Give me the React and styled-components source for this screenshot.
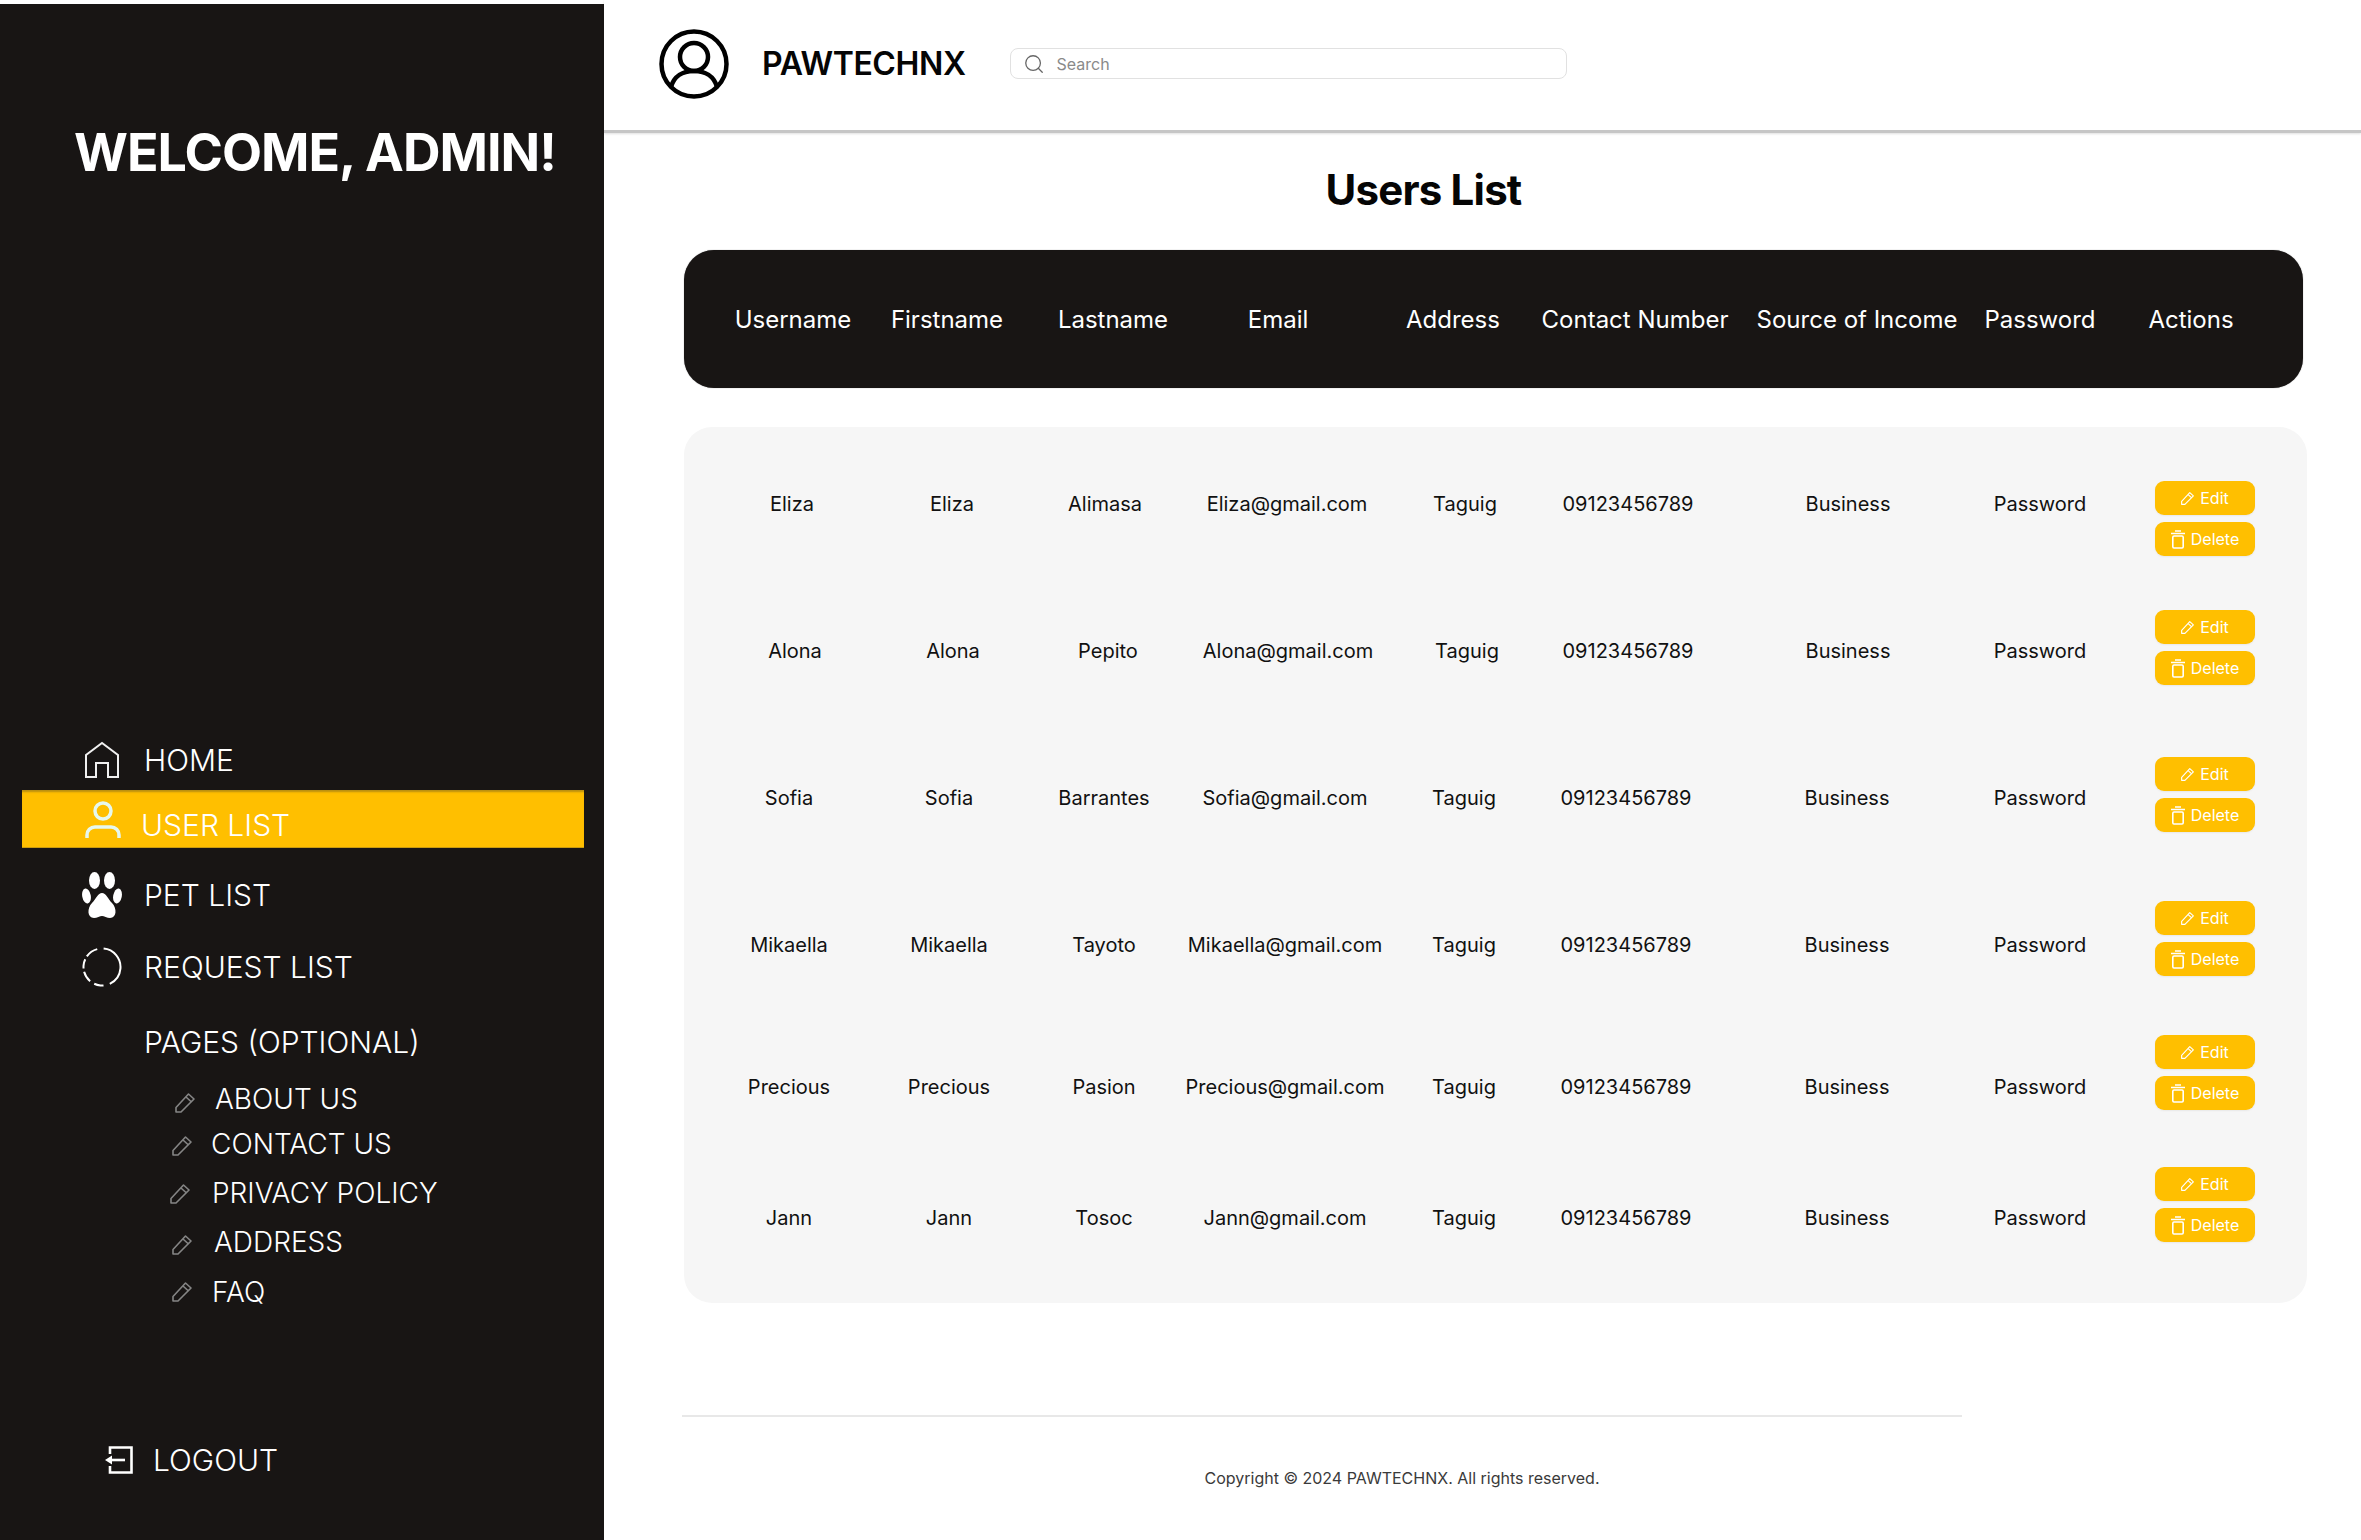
import styled, { createGlobalStyle } from 'styled-components';
import { Search } from 'lucide-react';

const GlobalStyle = createGlobalStyle`
  html, body {
    margin: 0;
    padding: 0;
    background: #ffffff;
    font-family: Inter, "Noto Sans", sans-serif;
  }
  * {
    box-sizing: border-box;
  }
`;

const Page = styled.div`
  display: flex;
  width: 2361px;
  height: 1540px;
  overflow: hidden;
`;

const Sidebar = styled.aside`
  width: 604px;
  flex-shrink: 0;
  margin-top: 4px;
  display: flex;
  flex-direction: column;
  background: #181514;
  color: #ffffff;
`;

const Welcome = styled.h1`
  margin: 119px 0 557px 74px;
  font-size: 52px;
  line-height: 60px;
  font-weight: 700;
  letter-spacing: -1px;
  white-space: nowrap;
`;

const Nav = styled.nav`
  display: flex;
  flex-direction: column;
`;

const NavRow = styled.div`
  display: flex;
  align-items: center;
  height: 40px;
  margin-top: ${({ $top }) => $top || 0}px;
  padding-left: ${({ $left }) => $left}px;
  gap: ${({ $gap }) => $gap}px;
  font-size: 30px;
  font-weight: 300;
  white-space: nowrap;
`;

const ActiveRow = styled.div`
  display: flex;
  align-items: center;
  height: 58px;
  margin: 10px 20px 0 22px;
  padding-left: 63px;
  gap: 20px;
  background: #ffbf00;
  box-shadow: inset 0 3px 2px -1px #b98f10, inset 0 -1px 0 #c99b10;
  font-size: 30px;
  font-weight: 300;
  white-space: nowrap;
`;

const ActiveLabel = styled.span`
  padding-top: 12px;
`;

const SubRow = styled.div`
  display: flex;
  align-items: center;
  height: 30px;
  margin-top: ${({ $top }) => $top}px;
  padding-left: ${({ $left }) => $left}px;
  gap: ${({ $gap }) => $gap}px;
  font-size: 28px;
  font-weight: 300;
  white-space: nowrap;
`;

const SubIcon = styled.span`
  display: flex;
  margin-top: ${({ $drop }) => $drop * 2}px;
  color: #858585;
`;

const LogoutRow = styled(NavRow)`
  margin-top: auto;
  margin-bottom: 60px;
`;

const Main = styled.main`
  flex: 1;
  min-width: 0;
  display: flex;
  flex-direction: column;
`;

const Header = styled.header`
  display: flex;
  align-items: center;
  height: 133px;
  padding: 0 0 3px 55px;
  border-bottom: 3px solid #c6c6c6;
  box-shadow: 0 1px 2px rgba(0, 0, 0, 0.12);
`;

const Brand = styled.span`
  margin-left: 33px;
  font-size: 32px;
  font-weight: 600;
  letter-spacing: -0.4px;
  color: #050505;
`;

const SearchBox = styled.div`
  display: flex;
  align-items: center;
  gap: 12px;
  width: 557px;
  height: 31px;
  margin-left: 44px;
  padding-left: 12px;
  border: 1px solid #e1e1e1;
  border-radius: 8px;
  font-size: 16px;
  color: #8a8a8a;
`;

const Title = styled.h2`
  margin: 32px 0 35px;
  padding-right: 118px;
  text-align: center;
  font-size: 42px;
  line-height: 50px;
  font-weight: 700;
  letter-spacing: -0.8px;
  color: #050505;
`;

const Content = styled.div`
  display: flex;
  flex-direction: column;
  padding-left: 80px;
`;

const TableHead = styled.div`
  display: grid;
  grid-template-columns: 150px 158px 174px 156px 194px 170px 274px 92px 210px;
  justify-items: center;
  align-items: center;
  width: 1619px;
  height: 138px;
  padding-left: 34px;
  border-radius: 30px;
  background: #181514;
  box-shadow: 0 0 1px #777;
  color: #ffffff;
  font-size: 24px;
  font-weight: 400;
  white-space: nowrap;
`;

const Panel = styled.div`
  width: 1623px;
  margin-top: 39px;
  padding: 4px 0 22px;
  border-radius: 28px;
  background: #f6f6f6;
`;

const Row = styled.div`
  display: grid;
  grid-template-columns: ${({ $cols }) => $cols};
  justify-items: center;
  align-items: center;
  height: ${({ $height }) => $height}px;
  padding-left: ${({ $left }) => $left}px;
  font-size: 20px;
  color: #111111;
  white-space: nowrap;
`;

const Actions = styled.div`
  display: flex;
  flex-direction: column;
  gap: 7px;
  align-self: start;
  margin-top: ${({ $top }) => $top}px;
`;

const ActionButton = styled.button`
  display: flex;
  align-items: center;
  justify-content: center;
  gap: 6px;
  width: 100px;
  height: 34px;
  padding: 0;
  border: 0;
  border-radius: 9px;
  background: #ffbf00;
  box-shadow: 0 1px 2px rgba(0, 0, 0, 0.06);
  color: #ffffff;
  font-family: inherit;
  font-size: 16px;
`;

const Footer = styled.footer`
  width: 1440px;
  margin: 112px 0 0 -2px;
`;

const FooterLine = styled.div`
  width: 1280px;
  height: 2px;
  background: #e8e8e8;
`;

const Copyright = styled.p`
  margin: 51px 0 0;
  text-align: center;
  font-size: 16px;
  line-height: 20px;
  color: #3a3a3a;
`;

const HomeIcon = () => (
  <svg width="36" height="38" viewBox="0 0 36 38" fill="none" stroke="#f0f0f0" strokeWidth="2">
    <path d="M2 36V14L18 2L34 14V36H24V22H12V36Z" />
  </svg>
);

const UserIcon = () => (
  <svg width="36" height="37" viewBox="0 0 36 37" fill="none" stroke="#e6f8ee" strokeWidth="3.5">
    <circle cx="18" cy="10" r="8" />
    <path d="M2 37V34A8 8 0 0 1 10 26H26A8 8 0 0 1 34 34V37" />
  </svg>
);

const PawIcon = () => (
  <svg width="40" height="46" viewBox="0 0 40 46" fill="#ffffff">
    <ellipse cx="12.5" cy="8.5" rx="5.5" ry="8.5" />
    <ellipse cx="27.5" cy="8.5" rx="5.5" ry="8.5" />
    <ellipse cx="4.5" cy="24" rx="4.3" ry="7.5" transform="rotate(-10 4.5 24)" />
    <ellipse cx="35.5" cy="24" rx="4.3" ry="7.5" transform="rotate(10 35.5 24)" />
    <path d="M20 21C24 21 26 27 30 31C35 36 35 46 28 46C25 46 22 44 20 44C18 44 15 46 12 46C5 46 5 36 10 31C14 27 16 21 20 21Z" />
  </svg>
);

const DashedCircleIcon = () => (
  <svg width="40" height="40" viewBox="0 0 40 40" fill="none" stroke="#ffffff" strokeWidth="2">
    <circle
      cx="20"
      cy="20"
      r="18.5"
      pathLength="360"
      strokeDasharray="150 20 30 15 35 10 30 10 40 20"
      transform="rotate(-85 20 20)"
    />
  </svg>
);

const PencilIcon = ({ size = 20, weight = 1.6 }) => (
  <svg width={size} height={size} viewBox="0 0 20 20" fill="none" stroke="currentColor" strokeWidth={weight} strokeLinejoin="round">
    <path d="M1 19V14.5L13.5 1L19 6L6 19Z" />
    <path d="M11 4L16.5 9" />
  </svg>
);

const TrashIcon = () => (
  <svg width="14" height="19" viewBox="0 0 14 19" fill="none" stroke="currentColor" strokeWidth="1.6">
    <path d="M0 3.5H14M4 1H10" />
    <rect x="1.8" y="6" width="10.4" height="12" rx="1.2" />
  </svg>
);

const LogoutIcon = () => (
  <svg width="28" height="28" viewBox="0 0 28 28" fill="none" stroke="#ffffff" strokeWidth="2.6">
    <path d="M5 8V1.5H26.5V26.5H5V20" />
    <path d="M20 14H7" />
    <path d="M0 14L7 9.5V18.5Z" fill="#ffffff" stroke="none" />
  </svg>
);

const AvatarIcon = () => (
  <svg width="70" height="70" viewBox="0 0 70 70" fill="none" stroke="#000000" strokeWidth="4.5">
    <circle cx="35" cy="35" r="32.5" />
    <circle cx="35" cy="28" r="14" />
    <path d="M12 58C15 47 24 42 35 42C46 42 55 47 58 58" />
  </svg>
);

const subPages = [
  { label: 'ABOUT US', top: 22, left: 175, gap: 20, drop: 4 },
  { label: 'CONTACT US', top: 15, left: 172, gap: 19, drop: 2 },
  { label: 'PRIVACY POLICY', top: 19, left: 170, gap: 22, drop: 1 },
  { label: 'ADDRESS', top: 19, left: 172, gap: 22, drop: 3 },
  { label: 'FAQ', top: 20, left: 172, gap: 20, drop: 0 },
];

const headers = ['Username', 'Firstname', 'Lastname', 'Email', 'Address', 'Contact Number', 'Source of Income', 'Password', 'Actions'];

const firstCols = '160px 160px 146px 218px 138px 188px 252px 132px 198px';
const secondCols = '146px 170px 140px 220px 138px 184px 256px 128px 202px';
const restCols = '146px 174px 136px 226px 132px 192px 250px 136px 194px';

const users = [
  { first: 'Eliza', last: 'Alimasa', cols: firstCols, left: 28, height: 146, actionsTop: 50 },
  { first: 'Alona', last: 'Pepito', cols: secondCols, left: 38, height: 147, actionsTop: 33 },
  { first: 'Sofia', last: 'Barrantes', cols: restCols, left: 32, height: 147, actionsTop: 33 },
  { first: 'Mikaella', last: 'Tayoto', cols: restCols, left: 32, height: 147, actionsTop: 30 },
  { first: 'Precious', last: 'Pasion', cols: restCols, left: 32, height: 137, actionsTop: 17 },
  { first: 'Jann', last: 'Tosoc', cols: restCols, left: 32, height: 126, actionsTop: 12 },
];

export default function App() {
  return (
    <>
      <GlobalStyle />
      <Page>
        <Sidebar>
          <Welcome>WELCOME, ADMIN!</Welcome>
          <Nav>
            <NavRow $left={84} $gap={24}>
              <HomeIcon />
              HOME
            </NavRow>
            <ActiveRow>
              <UserIcon />
              <ActiveLabel>USER LIST</ActiveLabel>
            </ActiveRow>
            <NavRow $top={27} $left={82} $gap={22}>
              <PawIcon />
              PET LIST
            </NavRow>
            <NavRow $top={32} $left={82} $gap={22}>
              <DashedCircleIcon />
              REQUEST LIST
            </NavRow>
            <NavRow $top={35} $left={144} $gap={0}>
              PAGES (OPTIONAL)
            </NavRow>
            {subPages.map((page) => (
              <SubRow key={page.label} $top={page.top} $left={page.left} $gap={page.gap}>
                <SubIcon $drop={page.drop}>
                  <PencilIcon />
                </SubIcon>
                {page.label}
              </SubRow>
            ))}
          </Nav>
          <LogoutRow $left={105} $gap={20}>
            <LogoutIcon />
            LOGOUT
          </LogoutRow>
        </Sidebar>
        <Main>
          <Header>
            <AvatarIcon />
            <Brand>PAWTECHNX</Brand>
            <SearchBox>
              <Search size={22} strokeWidth={1.4} color="#666666" />
              Search
            </SearchBox>
          </Header>
          <Title>Users List</Title>
          <Content>
            <TableHead>
              {headers.map((label) => (
                <span key={label}>{label}</span>
              ))}
            </TableHead>
            <Panel>
              {users.map((user) => (
                <Row key={user.first} $cols={user.cols} $left={user.left} $height={user.height}>
                  <span>{user.first}</span>
                  <span>{user.first}</span>
                  <span>{user.last}</span>
                  <span>{user.first}@gmail.com</span>
                  <span>Taguig</span>
                  <span>09123456789</span>
                  <span>Business</span>
                  <span>Password</span>
                  <Actions $top={user.actionsTop}>
                    <ActionButton>
                      <PencilIcon size={13} weight={1.8} />
                      Edit
                    </ActionButton>
                    <ActionButton>
                      <TrashIcon />
                      Delete
                    </ActionButton>
                  </Actions>
                </Row>
              ))}
            </Panel>
            <Footer>
              <FooterLine />
              <Copyright>Copyright © 2024 PAWTECHNX. All rights reserved.</Copyright>
            </Footer>
          </Content>
        </Main>
      </Page>
    </>
  );
}
